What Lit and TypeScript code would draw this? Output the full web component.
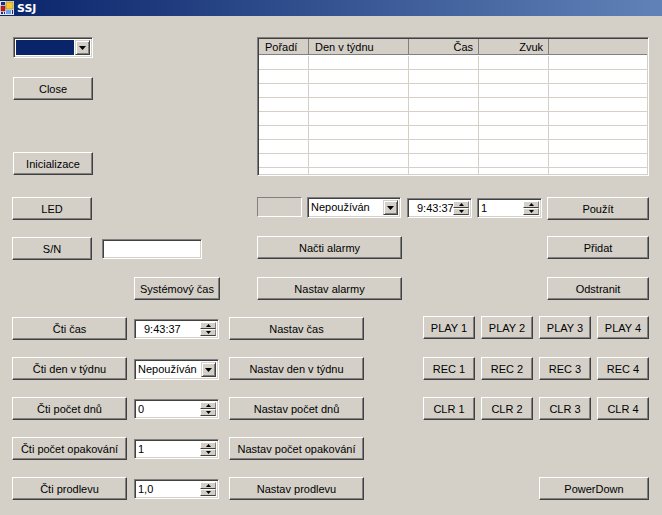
import { LitElement, html, css } from "lit";
import { customElement } from "lit/decorators.js";

const tri = (down: boolean, w = 7, h = 4) => html`<svg class="tri" width=${w} height=${h} viewBox="0 0 ${w} ${h}"><path fill="#000" d=${down ? `M0 0H${w}L${w / 2} ${h}Z` : `M0 ${h}H${w}L${w / 2} 0Z`}></path></svg>`;

@customElement("app-root")
export class AppRoot extends LitElement {
  static styles = css`
    :host { display: block; width: 662px; height: 515px; overflow: hidden; background: #d4d0c8; font: 11px "Liberation Sans", Arial, sans-serif; color: #000; }
    .title { height: 16px; display: flex; align-items: center; gap: 3px; background: linear-gradient(90deg, #0a246a, #6082b8); color: #fff; font: bold 11px "DejaVu Sans", sans-serif; }
    .title svg { display: block; }
    .top { display: flex; padding: 21px 0 0 13px; height: 160px; box-sizing: border-box; }
    .leftcol { width: 244px; display: flex; flex-direction: column; align-items: flex-start; }
    .leftcol .close { margin-top: 19px; }
    .leftcol .init { margin-top: 52px; }
    .rows { display: grid; grid-auto-rows: 40px; padding-left: 12px; margin-top: 21px; }
    .row { display: flex; align-items: flex-start; }
    .btn { box-sizing: border-box; height: 23px; flex: none; display: flex; align-items: center; justify-content: center; white-space: nowrap; background: #d4d0c8; border: 1px solid; border-color: #fff #404040 #404040 #fff; box-shadow: inset -1px -1px 0 #808080; }
    .up { margin-top: -1px; }
    .field { box-sizing: border-box; height: 20px; flex: none; display: flex; align-items: stretch; background: #fff; border: 1px solid; border-color: #808080 #fff #fff #808080; box-shadow: inset 1px 1px 0 #404040, inset -1px -1px 0 #d4d0c8; padding: 2px; }
    .off { margin-top: 2px; }
    .off1 { margin-top: 1px; }
    .val { flex: 1; min-width: 0; display: flex; align-items: center; padding: 0 0 1px 1px; white-space: nowrap; }
    .val.r { padding-left: 7px; }
    .val.sel { background: #0a246a; padding: 0; margin-right: 1px; }
    .combo { height: 21px; }
    .arrow { box-sizing: border-box; width: 15px; flex: none; display: flex; align-items: center; justify-content: center; background: #d4d0c8; border: 1px solid; border-color: #d4d0c8 #404040 #404040 #d4d0c8; box-shadow: inset 1px 1px 0 #fff, inset -1px -1px 0 #808080; }
    .spin { width: 16px; flex: none; display: flex; flex-direction: column; }
    .spin i { box-sizing: border-box; flex: 1; display: flex; align-items: center; justify-content: center; background: #d4d0c8; border: 1px solid; border-color: #fff #808080 #404040 #fff; }
    .tri { display: block; }
    .list { box-sizing: border-box; width: 392px; height: 139px; background: #fff; border: 1px solid; border-color: #808080 #fff #fff #808080; box-shadow: inset 1px 1px 0 #404040, inset -1px -1px 0 #d4d0c8; padding: 1px; overflow: hidden; }
    .lhead, .lrow { display: grid; grid-template-columns: 50px 100px 70px 70px 1fr; }
    .lhead { height: 17px; box-sizing: border-box; padding-bottom: 1px; }
    .lhead div { box-sizing: border-box; background: #d4d0c8; display: flex; align-items: center; padding: 0 5px 0 6px; border-right: 1px solid #808080; border-bottom: 1px solid #808080; box-shadow: 1px 0 0 #fff; }
    .lhead div.r { justify-content: flex-end; }
    .lhead div:last-child { border-right: 0; box-shadow: none; }
    .lrow { height: 14px; }
    .lrow div { box-sizing: border-box; border-right: 1px solid #d4d0c8; border-bottom: 1px solid #d4d0c8; }
    .lrow div:last-child { border-right: 0; }
    .box { box-sizing: border-box; width: 45px; height: 20px; flex: none; border: 1px solid; border-color: #808080 #fff #fff #808080; }
    .w80 { width: 80px; } .w86 { width: 86px; } .w100 { width: 100px; }
    .w94 { width: 94px; } .w65 { width: 65px; } .w102 { width: 102px; }
    .w145 { width: 145px; } .w115 { width: 115px; } .w85 { width: 85px; } .w135 { width: 135px; }
    .w52 { width: 52px; } .w110 { width: 110px; }
    .g5 { margin-left: 5px; } .g6 { margin-left: 6px; } .g7 { margin-left: 7px; } .g10 { margin-left: 10px; }
    .g55 { margin-left: 55px; } .g145 { margin-left: 145px; } .g37 { margin-left: 37px; } .g165 { margin-left: 165px; }
    .g175 { margin-left: 175px; }
    .right4 { margin-left: 59px; display: flex; gap: 6px; }
    .indent { margin-left: 122px; }
  `;

  private btn(t: string, cls: string) {
    return html`<div class="btn ${cls}">${t}</div>`;
  }
  private spin(t: string, cls: string, right = false) {
    return html`<div class="field ${cls}"><span class="val ${right ? "r" : ""}">${t}</span><span class="spin"><i>${tri(false, 5, 3)}</i><i>${tri(true, 5, 3)}</i></span></div>`;
  }
  private combo(t: string, cls: string) {
    return html`<div class="field combo ${cls}"><span class="val ${t ? "" : "sel"}">${t}</span><span class="arrow">${tri(true)}</span></div>`;
  }
  private ctl(read: string, mid: unknown, set: string, rest: unknown = "") {
    return html`<div class="row">${this.btn(read, "w115")}<span class="g7"></span>${mid}<span class="g10"></span>${this.btn(set, "w135")}${rest}</div>`;
  }
  private group(prefix: string, up = false) {
    return html`<div class="right4 ${up ? "up" : ""}">${[1, 2, 3, 4].map((n) => this.btn(`${prefix} ${n}`, "w52"))}</div>`;
  }

  render() {
    const rows = Array.from({ length: 9 });
    return html`
      <div class="title">
        <svg width="14" height="14" viewBox="0 0 14 14">
          <rect width="14" height="14" fill="#dfe6f2"></rect>
          <rect x="1" y="1" width="4" height="3" fill="#1a2f78"></rect>
          <rect x="6" y="1" width="7" height="7" fill="#f8c830" stroke="#9a7a20" stroke-width=".6"></rect>
          <rect x="1" y="5" width="4" height="5" fill="#c81818" stroke="#701010" stroke-width=".5"></rect>
          <rect x="6" y="9" width="5" height="4" fill="#70a0e8"></rect>
          <rect x="12" y="9" width="1" height="4" fill="#1a2f78"></rect>
          <rect x="1" y="11" width="2" height="2" fill="#1a2f78"></rect>
          <rect x="4" y="11" width="1" height="2" fill="#1a2f78"></rect>
        </svg>
        <span>SSJ</span>
      </div>
      <div class="top">
        <div class="leftcol">
          ${this.combo("", "w80")}
          ${this.btn("Close", "w80 close")}
          ${this.btn("Inicializace", "w80 init")}
        </div>
        <div class="list">
          <div class="lhead"><div>Pořadí</div><div>Den v týdnu</div><div class="r">Čas</div><div class="r">Zvuk</div><div></div></div>
          ${rows.map(() => html`<div class="lrow"><div></div><div></div><div></div><div></div><div></div></div>`)}
        </div>
      </div>
      <div class="rows">
        <div class="row">
          ${this.btn("LED", "w80")}
          <span class="g165"></span>
          <div class="box"></div>
          <span class="g5"></span>
          ${this.combo("Nepoužíván", "w94")}
          <span class="g6"></span>
          ${this.spin("9:43:37", "w65 off1", true)}
          <span class="g5"></span>
          ${this.spin("1", "w65 off1")}
          <span class="g5"></span>
          ${this.btn("Použít", "w102")}
        </div>
        <div class="row">
          ${this.btn("S/N", "w80")}
          <span class="g10"></span>
          <div class="field off w100"></div>
          <span class="g55"></span>
          ${this.btn("Načti alarmy", "w145 up")}
          <span class="g145"></span>
          ${this.btn("Přidat", "w102 up")}
        </div>
        <div class="row">
          <span class="indent"></span>
          ${this.btn("Systémový čas", "w86")}
          <span class="g37"></span>
          ${this.btn("Nastav alarmy", "w145")}
          <span class="g145"></span>
          ${this.btn("Odstranit", "w102")}
        </div>
        ${this.ctl("Čti čas", this.spin("9:43:37", "w85 off", true), "Nastav čas", this.group("PLAY", true))}
        ${this.ctl("Čti den v týdnu", this.combo("Nepoužíván", "w85 off"), "Nastav den v týdnu", this.group("REC"))}
        ${this.ctl("Čti počet dnů", this.spin("0", "w85 off"), "Nastav počet dnů", this.group("CLR"))}
        ${this.ctl("Čti počet opakování", this.spin("1", "w85 off"), "Nastav počet opakování")}
        ${this.ctl("Čti prodlevu", this.spin("1,0", "w85 off"), "Nastav prodlevu", html`<span class="g175"></span>${this.btn("PowerDown", "w110")}`)}
      </div>
    `;
  }
}
